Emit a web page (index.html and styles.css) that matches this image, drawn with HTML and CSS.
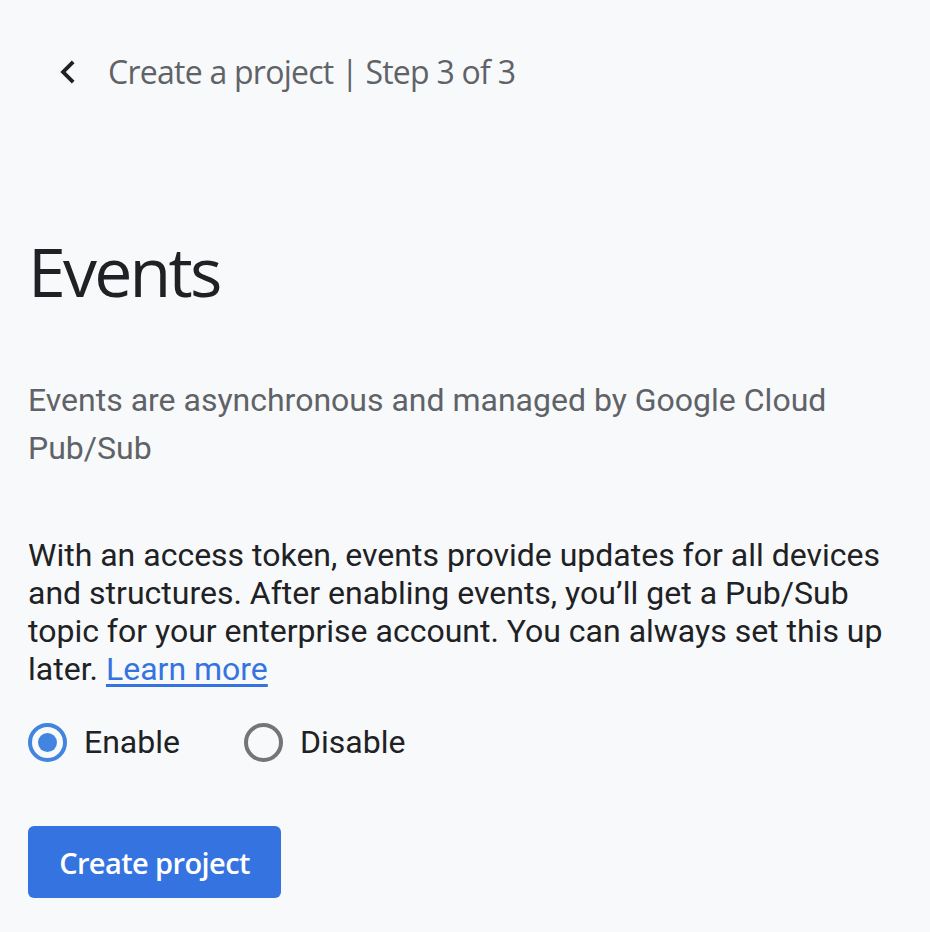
FILE: index.html
```html
<!DOCTYPE html>
<html>
<head>
<meta charset="utf-8">
<link rel="stylesheet" href="styles.css">
</head>
<body>
<div class="page">
  <header class="topbar">
    <button class="back" aria-label="Back">
      <svg viewBox="0 0 24 24"><path d="M15.41 7.41 14 6l-6 6 6 6 1.41-1.41L10.83 12z" fill="#202124"/></svg>
    </button>
    <span class="crumb">Create a project | Step 3 of 3</span>
  </header>
  <h1 class="title">Events</h1>
  <p class="subtitle">Events are asynchronous and managed by Google Cloud Pub/Sub</p>
  <p class="body">With an access token, events provide updates for all devices and structures. After enabling events, you’ll get a Pub/Sub topic for your enterprise account. You can always set this up later. <a href="#" class="link">Learn more</a></p>
  <div class="radios">
    <label class="radio"><span class="dot checked"></span><span>Enable</span></label>
    <label class="radio"><span class="dot"></span><span>Disable</span></label>
  </div>
  <button class="primary">Create project</button>
</div>
</body>
</html>
```
FILE: styles.css
```css
html, body { margin: 0; padding: 0; background: #f8f9fa; }
body { font-family: Roboto, "Liberation Sans", sans-serif; color: #202124; }
.page { padding: 0 28px 0 28px; }
.topbar { display: flex; align-items: center; padding-top: 49px; }
.back { width: 46px; height: 46px; border: 0; background: none; padding: 0; margin-left: 17px; display: block; }
.back svg { width: 46px; height: 46px; display: block; }
.crumb { margin-left: 17px; font-family: "Open Sans", sans-serif; font-size: 32px; letter-spacing: -0.75px; color: #5f6368; line-height: 46px; }
.title { font-family: "Open Sans", sans-serif; font-weight: 400; font-size: 68px; letter-spacing: -2.8px; margin: 136px 0 0; line-height: 80px; color: #202124; }
.subtitle { font-size: 32px; line-height: 48px; color: #5f6368; margin: 65px 0 0; max-width: 840px; }
.body { font-size: 32px; line-height: 38px; margin: 64px 0 0; max-width: 870px; color: #202124; }
.link { color: #3574e0; text-decoration: underline; text-underline-offset: 4px; }
.radios { display: flex; gap: 64px; margin-top: 34px; align-items: center; height: 40px; }
.radio { display: flex; align-items: center; gap: 17px; font-size: 32px; line-height: 40px; color: #202124; }
.dot { width: 31px; height: 31px; border: 4px solid #757575; border-radius: 50%; position: relative; }
.dot.checked { border-color: #4285e0; }
.dot.checked::after { content: ""; position: absolute; left: 6px; top: 6px; width: 19px; height: 19px; border-radius: 50%; background: #4285e0; }
.primary { display: block; margin-top: 64px; width: 253px; height: 72px; border: 0; border-radius: 6px; background: #3574e0; color: #fff; font-family: "Open Sans", sans-serif; font-size: 29px; letter-spacing: -0.6px; font-weight: 600; padding: 0; }
```
